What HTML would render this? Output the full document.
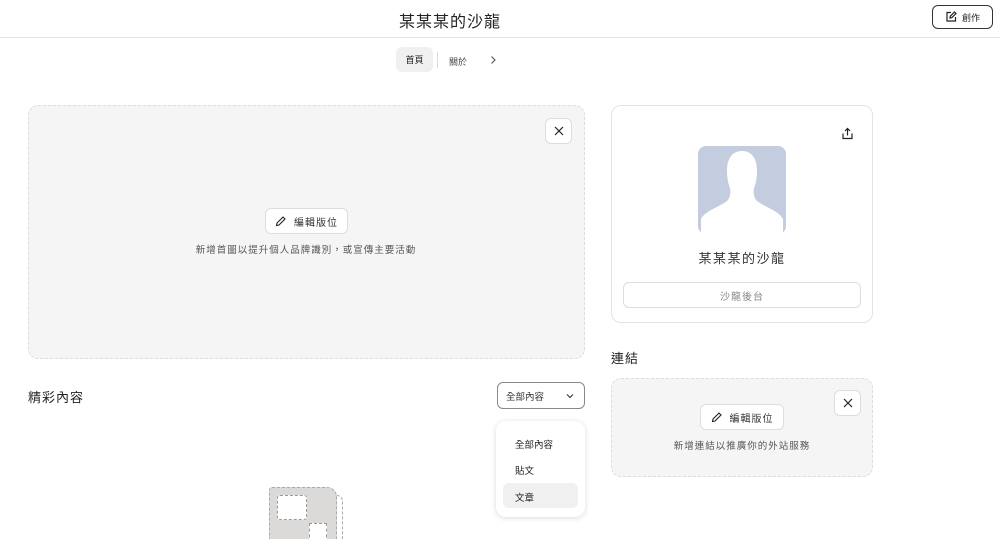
<!DOCTYPE html>
<html><head><meta charset="utf-8"><style>
*{box-sizing:border-box;margin:0;padding:0}
html,body{width:1000px;height:539px;overflow:hidden}
body{background:#fff;font-family:"Liberation Sans","Noto Sans CJK TC",sans-serif;color:#222;position:relative}
.a{position:absolute}
.btn{position:absolute;background:#fff;border:1px solid #ddd;border-radius:6px;display:flex;align-items:center;justify-content:center;font-size:10px;color:#333;letter-spacing:1px}
.x{position:absolute;background:#fff;border:1px solid #ddd;border-radius:6px;display:flex;align-items:center;justify-content:center}
.box{position:absolute;background:#f5f5f5;border:1px dashed #ddd;border-radius:10px}
</style></head><body>
<div class="a" style="left:0;top:0;width:1000px;height:38px;border-bottom:1px solid #e3e3e3"></div>
<div class="a" style="left:380px;top:8px;width:140px;text-align:center;font-size:16px;letter-spacing:1px">某某某的沙龍</div>
<div class="a" style="left:932px;top:5px;width:61px;height:24px;border:1px solid #333;border-radius:6px;display:flex;align-items:center;justify-content:center;font-size:9px;gap:5px">
<svg width="12" height="12" viewBox="0 0 12 12" fill="none" stroke="#222" stroke-width="1.2"><path d="M6 1.5H2v8.5h8.5V6"/><path d="M5 7l.3-1.8L9.5 1l1.5 1.5L6.8 6.7z"/></svg>創作</div>
<div class="a" style="left:396px;top:47px;width:37px;height:25px;background:#f0f0f0;border-radius:6px;font-size:9px;display:flex;align-items:center;justify-content:center">首頁</div>
<div class="a" style="left:437px;top:52px;width:1px;height:16px;background:#ddd"></div>
<div class="a" style="left:449px;top:55px;font-size:9px;color:#444">關於</div>
<svg class="a" style="left:489px;top:55px" width="8" height="10" viewBox="0 0 8 10" fill="none" stroke="#555" stroke-width="1.1"><path d="M2.5 1.5L6 5 2.5 8.5"/></svg>

<div class="box" style="left:28px;top:105px;width:557px;height:254px"></div>
<div class="x" style="left:545px;top:118px;width:27px;height:26px"><svg width="10" height="10" viewBox="0 0 10 10" stroke="#222" stroke-width="1.2"><path d="M1 1l8 8M9 1L1 9"/></svg></div>
<div class="btn" style="left:265px;top:208px;width:83px;height:26px;gap:8px"><svg width="11" height="11" viewBox="0 0 11 11" fill="none" stroke="#222" stroke-width="1.1"><path d="M1.5 9.5l.5-2.5 6-6 2 2-6 6z"/></svg>編輯版位</div>
<div class="a" style="left:150px;top:242px;width:312px;text-align:center;font-size:9.5px;color:#555;letter-spacing:1px">新增首圖以提升個人品牌識別，或宣傳主要活動</div>

<div class="a" style="left:28px;top:387px;font-size:13px;letter-spacing:1px">精彩內容</div>
<div class="a" style="left:497px;top:382px;width:88px;height:27px;border:1px solid #888;border-radius:6px;font-size:9.5px;display:flex;align-items:center;padding-left:8px;color:#333">全部內容<svg style="position:absolute;right:10px;top:10px" width="8" height="6" viewBox="0 0 8 6" fill="none" stroke="#333" stroke-width="1.1"><path d="M1 1.5l3 3 3-3"/></svg></div>
<div class="a" style="left:496px;top:421px;width:89px;height:96px;background:#fff;border-radius:10px;box-shadow:0 1px 6px rgba(0,0,0,.15)"></div>
<div class="a" style="left:503px;top:483px;width:75px;height:25px;background:#f0f0f0;border-radius:6px"></div>
<div class="a" style="left:515px;top:437px;font-size:9.5px">全部內容</div>
<div class="a" style="left:515px;top:463px;font-size:9.5px">貼文</div>
<div class="a" style="left:515px;top:490px;font-size:9.5px">文章</div>
<div class="a" style="left:269px;top:487px;width:68px;height:60px;background:#dcd9d9;border:1px dashed #aaa;border-radius:3px 10px 0 0"></div>
<div class="a" style="left:337px;top:495px;width:6px;height:50px;border-right:1px dashed #aaa;border-top:1px dashed #aaa;border-radius:0 6px 0 0"></div>
<div class="a" style="left:277px;top:495px;width:30px;height:25px;background:#fff;border:1px dashed #999;border-radius:3px"></div>
<div class="a" style="left:309px;top:523px;width:18px;height:20px;background:#fff;border:1px dashed #999"></div>

<div class="a" style="left:611px;top:105px;width:262px;height:218px;border:1px solid #e3e3e3;border-radius:10px"></div>
<svg class="a" style="left:841px;top:127px" width="13" height="13" viewBox="0 0 13 13" fill="none" stroke="#222" stroke-width="1.2"><path d="M6.5 8.5V1.5M4 4l2.5-2.5L9 4"/><path d="M2 6.5v5h9v-5"/></svg>
<svg class="a" style="left:698px;top:146px" width="88" height="88" viewBox="0 0 88 88"><rect width="88" height="88" rx="8" fill="#c4cde0"/><path d="M44 5c-10 0-15 8-15 20 0 6 1 12 3 17 1 5 0 10-3 13-8 6-22 10-26 18v15h82V73c-4-8-18-12-26-18-3-3-4-8-3-13 2-5 3-11 3-17 0-12-5-20-15-20z" fill="#fff"/></svg>
<div class="a" style="left:611px;top:248px;width:262px;text-align:center;font-size:13px;letter-spacing:1.5px;color:#333">某某某的沙龍</div>
<div class="btn" style="left:623px;top:282px;width:238px;height:26px;color:#888;border-color:#ddd">沙龍後台</div>

<div class="a" style="left:611px;top:348px;font-size:13px;letter-spacing:1px">連結</div>
<div class="box" style="left:611px;top:378px;width:262px;height:99px"></div>
<div class="x" style="left:834px;top:390px;width:27px;height:26px"><svg width="10" height="10" viewBox="0 0 10 10" stroke="#222" stroke-width="1.2"><path d="M1 1l8 8M9 1L1 9"/></svg></div>
<div class="btn" style="left:700px;top:404px;width:84px;height:26px;gap:8px"><svg width="11" height="11" viewBox="0 0 11 11" fill="none" stroke="#222" stroke-width="1.1"><path d="M1.5 9.5l.5-2.5 6-6 2 2-6 6z"/></svg>編輯版位</div>
<div class="a" style="left:611px;top:438px;width:262px;text-align:center;font-size:9.5px;color:#555;letter-spacing:1px">新增連結以推廣你的外站服務</div>
</body></html>
